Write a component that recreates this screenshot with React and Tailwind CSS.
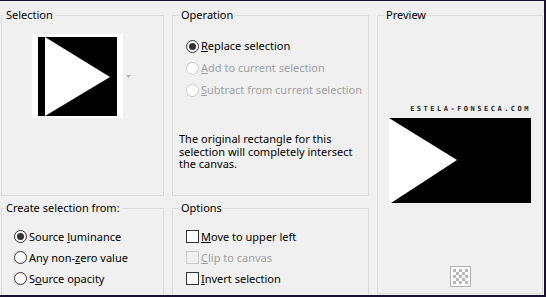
import React from "react";

function Radio({ checked, disabled }) {
  return (
    <span
      className={`flex h-[13px] w-[13px] shrink-0 items-center justify-center rounded-full border bg-white ${
        disabled ? "border-[#cccccc] bg-[#f0f0f0]" : "border-[#333333]"
      }`}
    >
      {checked && <span className="h-[7px] w-[7px] rounded-full bg-[#333333]" />}
    </span>
  );
}

function Check({ disabled }) {
  return (
    <span
      className={`block h-[13px] w-[13px] shrink-0 border ${
        disabled ? "border-[#cccccc] bg-[#f0f0f0]" : "border-[#333333] bg-white"
      }`}
    />
  );
}

function Row({ children, control, disabled }) {
  return (
    <div className={`flex h-[21px] items-center gap-[2px] ${disabled ? "text-[#a0a0a0]" : ""}`}>
      {control}
      <span>{children}</span>
    </div>
  );
}

export default function App() {
  return (
    <div className="h-[297px] w-[546px] overflow-hidden border-t border-r-2 border-b-2 border-[#1a1030] bg-[#f0f0f0] font-['Noto_Sans',sans-serif] text-[11px] leading-[16px] text-black">
      <div className="grid grid-cols-[163px_197px_166px] grid-rows-[189px_120px] gap-x-2 gap-y-[4px] pl-[1px] pt-[6px]">
        {/* Selection */}
        <fieldset className="min-w-0 border border-[#dcdcdc]">
          <legend className="ml-[2px] px-[2px]">Selection</legend>
          <div className="ml-[30px] mt-[11px] flex items-center">
            <div className="h-[84px] w-[91px] bg-white pl-[6px] pt-[3px]">
              <svg width="79" height="79" viewBox="0 0 79 79">
                <rect width="79" height="79" fill="#000" />
                <polygon points="7,0 72,40 7,79" fill="#fff" />
              </svg>
            </div>
            <svg className="ml-[3px]" width="5" height="3" viewBox="0 0 5 3">
              <polygon points="0,0 5,0 2.5,3" fill="#b4b4b4" />
            </svg>
          </div>
        </fieldset>

        {/* Operation */}
        <fieldset className="min-w-0 border border-[#dcdcdc]">
          <legend className="ml-[6px] px-[2px]">Operation</legend>
          <div className="mt-[12px] pl-[13px]">
            <div className="flex h-[22px] items-center gap-[2px]">
              <Radio checked />
              <span><u>R</u>eplace selection</span>
            </div>
            <div className="flex h-[22px] items-center gap-[2px] text-[#a0a0a0]">
              <Radio disabled />
              <span><u>A</u>dd to current selection</span>
            </div>
            <div className="flex h-[22px] items-center gap-[2px] text-[#a0a0a0]">
              <Radio disabled />
              <span><u>S</u>ubtract from current selection</span>
            </div>
          </div>
          <p className="mt-[32px] pl-[6px] leading-[12.5px]">
            The original rectangle for this
            <br />
            selection will completely intersect
            <br />
            the canvas.
          </p>
        </fieldset>

        {/* Preview */}
        <fieldset className="row-span-2 h-[287px] min-w-0 self-start border border-[#dcdcdc]">
          <legend className="ml-[6px] px-[2px]">Preview</legend>
          <div className="flex flex-col items-center">
            <div className="mt-[82px] flex w-[142px] flex-col">
              <div className="h-[8px] text-right font-['DejaVu_Sans_Mono',monospace] text-[7px] font-bold leading-[8px] tracking-[2.5px] text-[#222]">
                ESTELA-FONSECA.COM
              </div>
              <svg className="mt-[5px]" width="142" height="85" viewBox="0 0 142 85">
                <rect width="142" height="85" fill="#000" />
                <polygon points="0,0 68,42 2,85 0,85" fill="#fff" />
              </svg>
            </div>
            <div className="mt-[63px] h-[21px] w-[21px] border border-[#b0b0b0] bg-white p-[2px]">
              <svg width="15" height="15" viewBox="0 0 15 15">
                <defs>
                  <pattern id="chk" width="6" height="6" patternUnits="userSpaceOnUse">
                    <rect width="3" height="3" fill="#b8b8b8" />
                    <rect x="3" y="3" width="3" height="3" fill="#b8b8b8" />
                  </pattern>
                </defs>
                <rect width="15" height="15" fill="url(#chk)" />
              </svg>
            </div>
          </div>
        </fieldset>

        {/* Create selection from */}
        <fieldset className="min-w-0 border border-[#dcdcdc]">
          <legend className="ml-[2px] px-[2px]">Create selection from:</legend>
          <div className="mt-[10px] pl-[12px]">
            <Row control={<Radio checked />}>Source <u>l</u>uminance</Row>
            <Row control={<Radio />}>Any non-<u>z</u>ero value</Row>
            <Row control={<Radio />}>S<u>o</u>urce opacity</Row>
          </div>
        </fieldset>

        {/* Options */}
        <fieldset className="min-w-0 border border-[#dcdcdc]">
          <legend className="ml-[6px] px-[2px]">Options</legend>
          <div className="mt-[10px] pl-[13px]">
            <Row control={<Check />}><u>M</u>ove to upper left</Row>
            <Row control={<Check disabled />} disabled><u>C</u>lip to canvas</Row>
            <Row control={<Check />}><u>I</u>nvert selection</Row>
          </div>
        </fieldset>
      </div>
    </div>
  );
}
